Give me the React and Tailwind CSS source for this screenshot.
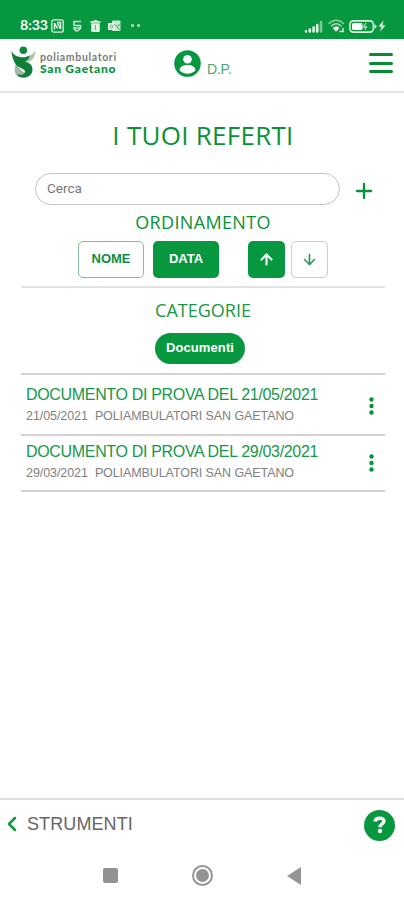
import { ArrowDown, ArrowUp, ChevronLeft, Plus } from "lucide-react";

const documents = [
  { id: 1, title: "DOCUMENTO DI PROVA DEL 21/05/2021", date: "21/05/2021", place: "POLIAMBULATORI SAN GAETANO" },
  { id: 2, title: "DOCUMENTO DI PROVA DEL 29/03/2021", date: "29/03/2021", place: "POLIAMBULATORI SAN GAETANO" },
];

// Barra di stato del telefono
function StatusBar() {
  return (
    <div className="h-[39px] bg-[#07983f] text-white flex items-start justify-between pl-5 pr-[18px] pt-[17px]">
      <div className="flex items-center h-[18px]">
        <span className="font-['Inter',sans-serif] text-[13px] font-semibold w-[31px] tracking-[-0.3px]">8:33</span>
        <svg className="w-[13px] h-[14px]" viewBox="0 0 13 14" fill="none" stroke="#d9f0df">
          <rect x="0.8" y="0.8" width="11.4" height="12.4" rx="2" strokeWidth="1.3" />
          <path d="M3.5 10.5V4l3 5.500M6 3.500h3.500V10L6.500 4.500" strokeWidth="1.500" />
        </svg>
        <svg className="ml-[8px] w-[10px] h-3" viewBox="0 0 10 12" fill="none" stroke="#c5e8cd" strokeWidth="1.600">
          <path d="M9 1.500H2v4h6.500M1 8h7.500V5M2 8c.5 2 2 2.800 3 3 1.500-.4 3-1.500 3.500-3" />
        </svg>
        <svg className="ml-[8px] w-[11px] h-[12px]" viewBox="0 0 11 12">
          <path d="M0.500 1h3l1-1h2l1 1h3v1.700h-10zM1.200 3.300h8.600V11q0 1-1 1H2.200q-1 0-1-1z" fill="#dff3e4" />
          <path d="M5.500 5v5" stroke="#62b97d" />
        </svg>
        <svg className="ml-[7px] w-[13px] h-[12px]" viewBox="0 0 13 12">
          <rect x="4" y="0.500" width="8.500" height="10.500" rx="1" fill="#c8e9d0" />
          <rect x="0" y="3" width="7" height="7" rx="1" fill="#eefaf0" />
          <circle cx="3.500" cy="6.500" r="1.500" fill="none" stroke="#41a864" />
          <path d="M6 4l3 2.500L12.500 4M9 7l3.500 3" fill="none" stroke="#41a864" />
        </svg>
        <span className="ml-[10px] mb-[2px] flex gap-[3px]">
          <i className="w-[3px] h-[3px] rounded-full bg-[#b9e3c5]" />
          <i className="w-[3px] h-[3px] rounded-full bg-[#b9e3c5]" />
        </span>
      </div>

      <div className="flex items-center h-[18px]">
        <svg className="w-[19px] h-[13px]" viewBox="0 0 19 13" strokeWidth="2.600" strokeLinecap="round">
          <path d="M2 11.300v.2M5.800 9.500v2M9.600 7.500v4M13.200 5v6.500" stroke="#e6f6ea" />
          <path d="M17 2v9.500" stroke="#7cc795" />
        </svg>
        <svg className="ml-[5px] w-[17px] h-[14px]" viewBox="0 0 17 14" fill="none" strokeLinecap="round">
          <path d="M1 4.500c4.500-4.200 10-4.200 14.500 0" stroke="#8ccf9f" strokeWidth="1.500" />
          <path d="M3.500 7c3-2.800 6.500-2.800 9.500 0" stroke="#a9dbb7" strokeWidth="1.600" />
          <path d="M5.500 9c1.800-1.500 4-1.500 5.500 0L8.300 12z" fill="#fff" stroke="#fff" />
          <path d="M12 12.500h3.500M15 9.500v3" stroke="#d9f0df" strokeWidth="1.400" />
        </svg>
        <svg className="ml-[4px] w-[28px] h-[13px]" viewBox="0 0 28 13">
          <rect x="0.900" y="0.900" width="23.500" height="11.200" rx="3.500" fill="none" stroke="#d4eedb" strokeWidth="1.600" />
          <rect x="3" y="3" width="10.500" height="7" rx="1.500" fill="#fff" />
          <path d="M25.500 4.500q2 0 2 2t-2 2z" fill="#e6f6ea" />
          <path d="M17 3l-2.500 4h3l-1.500 3" fill="none" stroke="#b3dfc0" strokeWidth="1.300" />
        </svg>
        <svg className="ml-[1px] w-[8px] h-[12px]" viewBox="0 0 8 12" fill="#e0f4e5">
          <path d="M5.500 0.500L0.500 6.500h3L2 11.500l5.500-6H4.500z" />
        </svg>
      </div>
    </div>
  );
}

function Logo() {
  return (
    <div className="flex items-start">
      <svg className="w-[25px] h-[32px]" viewBox="0 0 25 32">
        <circle cx="12.300" cy="4.200" r="3.800" fill="#0c8a3c" />
        <path d="M24.500 4.500c-.5 6-2.500 9.500-6.500 11-2.500.8-4 .8-6 1.500 1-5.500 8-6 12.500-12.500z" fill="#a4c6a8" />
        <path d="M5 17.500C3 22 3 27.500 6.500 30c4.500 3 12 1.500 14-4-5 3-10 .5-15.500-8.500z" fill="#9fb9a2" />
        <path d="M0.300 4.500c2 4 4.200 5.500 8.500 6.500 3.500.8 6.500 0 10-1.500-.8 3.500-2.500 5-5.300 6 4.500 1.300 8 3 8 8 0 5.500-4.500 8-9.500 8-3 0-5-1-6-3 4 1 8.500 0 8-3.300-.4-2.700-7.300-3.200-9.500-7.200C2.500 15 1.100 11 .3 4.500z" fill="#0d7f39" />
      </svg>
      <div className="ml-[4px] mt-[5px] font-['Lato',sans-serif] whitespace-nowrap">
        <p className="h-3 leading-3 text-[10.500px] font-bold text-[#777d78] tracking-[0.650px]">poliambulatori</p>
        <p className="h-3 leading-3 text-[12px] font-black text-[#07923d] tracking-[0.750px]">San Gaetano</p>
      </div>
    </div>
  );
}

function Header() {
  return (
    <header className="h-[54px] border-b-2 border-[#e6e6e6] flex items-start pl-[11px] pr-[11px]">
      <div className="mt-[7px] w-[163px]">
        <Logo />
      </div>
      <svg className="mt-[11px] w-[27px] h-[27px]" viewBox="0 0 27 27">
        <circle cx="13.500" cy="13.500" r="13.300" fill="#07983f" />
        <circle cx="13.500" cy="9.300" r="4.300" fill="#fff" />
        <path d="M5.500 20.300c.5-4 4-5.300 8-5.300s7.500 1.300 8 5.300c-4 4.500-12 4.500-16 0z" fill="#fff" />
      </svg>
      <span className="ml-[6px] mt-[21px] text-[14px] leading-[18px] text-[#4fa573] tracking-[-0.2px]">D.P.</span>
      <button aria-label="Menu" className="ml-auto mt-[14px] flex flex-col gap-[5.500px]">
        <span className="block w-6 h-[3px] rounded-sm bg-[#078c34]" />
        <span className="block w-6 h-[3px] rounded-sm bg-[#078c34]" />
        <span className="block w-6 h-[3px] rounded-sm bg-[#078c34]" />
      </button>
    </header>
  );
}

function DocumentRow({ doc, className }) {
  return (
    <li className={`flex justify-between border-b-2 border-[#d2d2d2] pl-[5px] pr-[11px] ${className}`}>
      <div className="whitespace-nowrap">
        <h3 className="text-[16px] leading-[20px] text-[#15984a] tracking-[-0.330px]">{doc.title}</h3>
        <p className="mt-[2px] text-[12.500px] leading-[18px] text-[#808080]">
          <span className="tracking-[-0.070px]">{doc.date}</span>
          <span className="ml-[7px] tracking-[-0.090px]">{doc.place}</span>
        </p>
      </div>
      <svg aria-label="Opzioni" className="mt-[12px] w-[5px] h-[18px]" viewBox="0 0 5 18" fill="#079035">
        <circle cx="2.500" cy="2.500" r="2.200" />
        <circle cx="2.500" cy="9" r="2.200" />
        <circle cx="2.500" cy="15.500" r="2.200" />
      </svg>
    </li>
  );
}

export default function App() {
  return (
    <div className="h-[900px] w-[404px] bg-white flex flex-col overflow-hidden font-['Liberation_Sans',Arial,sans-serif]">
      <StatusBar />
      <Header />

      <main className="flex-1 pl-[21px] pr-[19px]">
        <h1 className="mt-[24px] text-center font-['Open_Sans',sans-serif] text-[26px] leading-[36px] font-medium text-[#0a9137] tracking-[0.270px]">
          I TUOI REFERTI
        </h1>

        {/* Ricerca */}
        <div className="mt-[20px] flex items-center pl-[14px]">
          <input
            placeholder="Cerca"
            className="w-[305px] h-8 rounded-full border-[1.500px] border-[#c4c4c4] px-[11px] pb-[2px] font-['Roboto',sans-serif] text-[13.500px] placeholder:text-[#777]"
          />
          <Plus className="ml-[12px] mt-[3px] w-[24px] h-[24px] text-[#0a9137]" strokeWidth={2.300} />
        </div>

        {/* Ordinamento */}
        <h2 className="mt-[4px] text-center font-['Open_Sans',sans-serif] text-[18px] leading-[26px] font-medium text-[#0a9137] tracking-[0.350px]">
          ORDINAMENTO
        </h2>
        <div className="mt-[6px] pb-[8px] pl-[57px] flex border-b-2 border-[#e2e2e2] text-[13px] font-bold">
          <button className="w-[66px] h-[37px] pb-[2px] rounded-[5px] border border-[#83bf9b] text-[#0b8f3e]">NOME</button>
          <button className="ml-[9px] w-[66px] h-[37px] pb-[2px] rounded-[5px] bg-[#07983f] text-white">DATA</button>
          <button aria-label="Crescente" className="ml-[29px] w-[37px] h-[37px] rounded-[5px] bg-[#07983f] text-white flex items-center justify-center">
            <ArrowUp className="mr-[1px] w-[17px] h-[17px]" strokeWidth={3} />
          </button>
          <button aria-label="Decrescente" className="ml-[6px] w-[37px] h-[37px] rounded-[5px] border border-[#b7d8c2] text-[#259754] flex items-center justify-center">
            <ArrowDown className="w-[17px] h-[17px]" strokeWidth={2.300} />
          </button>
        </div>

        {/* Categorie */}
        <div className="pt-[9px] pb-[9px] border-b-2 border-[#d2d2d2] flex flex-col items-center">
          <h2 className="font-['Open_Sans',sans-serif] text-[18px] leading-[26px] font-medium text-[#1a9747]">CATEGORIE</h2>
          <button className="mt-[10px] mr-[6px] w-[90px] h-[31px] pb-[1px] rounded-full bg-[#07983f] text-white text-[13px] font-bold tracking-[0.1px]">
            Documenti
          </button>
        </div>

        <ul>
          <DocumentRow doc={documents[0]} className="h-[61px] pt-[10px]" />
          <DocumentRow doc={documents[1]} className="h-[56px] pt-[6px]" />
        </ul>
      </main>

      <footer className="h-[102px] border-t-2 border-[#dedede]">
        <div className="flex items-center h-[50px] pl-[6px] pr-[9px]">
          <ChevronLeft className="mb-[2px] w-[12px] h-[24px]" viewBox="6 0 12 24" stroke="#159447" strokeWidth={2.500} />
          <span className="ml-[9px] mb-[2px] text-[18px] text-[#666] tracking-[0.100px]">STRUMENTI</span>
          <span className="ml-auto w-[31px] h-[31px] rounded-full bg-[#07983f] flex items-center justify-center">
            <svg className="w-[14px] h-[18px]" viewBox="0 0 14 18" fill="none" stroke="#fff" strokeWidth="3.400">
              <path d="M2 5.500C2.500 1.200 11 1.200 11 5c0 3-4 2.800-4 6.300" />
              <circle cx="7" cy="15" r="2.200" fill="#fff" stroke="none" />
            </svg>
          </span>
        </div>

        {/* Tasti di navigazione Android */}
        <div className="flex items-center h-[50px] pt-[1px] pl-[103px]">
          <span className="w-[15px] h-[15px] rounded-[2px] bg-[#929292]" />
          <span className="ml-[74px] w-[21px] h-[21px] rounded-full border-2 border-[#949494] flex items-center justify-center">
            <span className="w-[13px] h-[13px] rounded-full bg-[#949494]" />
          </span>
          <svg className="ml-[74px] w-[14px] h-[18px]" viewBox="0 0 14 18" fill="#949494">
            <path d="M0 9L14 0v18z" />
          </svg>
        </div>
      </footer>
    </div>
  );
}
